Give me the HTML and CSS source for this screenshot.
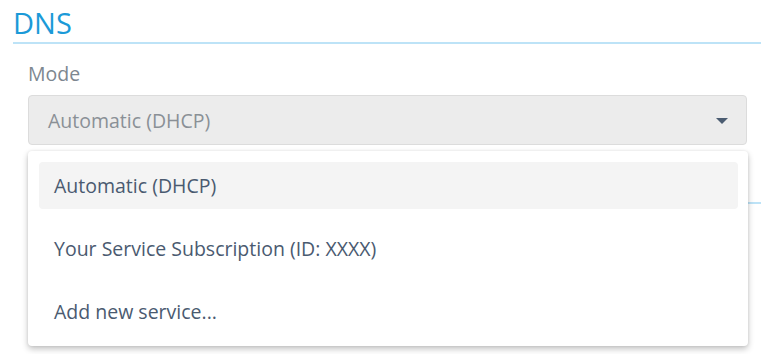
FILE: index.html
```html
<!DOCTYPE html>
<html>
<head>
<meta charset="utf-8">
<link rel="stylesheet" href="styles.css">
</head>
<body>
<div class="page">
  <section class="section">
    <h2 class="section-title">DNS</h2>
    <div class="field">
      <label class="field-label">Mode</label>
      <div class="select">
        <span class="select-value">Automatic (DHCP)</span>
        <svg class="select-arrow" width="12" height="6" viewBox="0 0 12 6"><path d="M0 0H12L6 6Z" fill="#4b5c71"/></svg>
      </div>
      <ul class="menu">
        <li class="menu-item active">Automatic (DHCP)</li>
        <li class="menu-item">Your Service Subscription (ID: XXXX)</li>
        <li class="menu-item">Add new service...</li>
      </ul>
    </div>
  </section>
  <section class="section next">
    <div class="next-line"></div>
  </section>
</div>
</body>
</html>
```
FILE: styles.css
```css
html, body {
  margin: 0;
  padding: 0;
  background: #ffffff;
}
body {
  font-family: "Open Sans", "Noto Sans", sans-serif;
  width: 761px;
  height: 354px;
  overflow: hidden;
}
.page {
  padding-left: 13px;
}
.section-title {
  margin: 0;
  padding-top: 3px;
  font-size: 29px;
  line-height: 39px;
  font-weight: 400;
  color: #1b9ad8;
  border-bottom: 2px solid #bde3f7;
}
.field {
  position: relative;
  padding-left: 15px;
  padding-right: 14px;
}
.field-label {
  display: block;
  margin-top: 17px;
  font-size: 19.5px;
  line-height: 26px;
  color: #7d8790;
}
.select {
  margin-top: 8px;
  height: 48px;
  border: 1px solid #dcdcdc;
  border-radius: 4px;
  background: #ececec;
  display: flex;
  align-items: center;
  justify-content: space-between;
  padding: 0 18px 0 19px;
}
.select-value {
  font-size: 19.5px;
  color: #8a9096;
}
.select-arrow {
  display: block;
  margin-top: 2px;
}
.menu {
  position: absolute;
  top: 90px;
  left: 15px;
  right: 13px;
  margin: 0;
  list-style: none;
  background: #ffffff;
  border-radius: 4px;
  box-shadow: 0 3px 6px rgba(0,0,0,0.24), 0 0 3px rgba(0,0,0,0.08);
  padding: 11px 10px 11px 11px;
  display: flex;
  flex-direction: column;
  gap: 16px;
  z-index: 2;
}
.menu-item {
  height: 47px;
  display: flex;
  align-items: center;
  padding-left: 15px;
  border-radius: 4px;
  font-size: 19.5px;
  color: #4a5a70;
}
.menu-item.active {
  background: #f4f4f4;
}
.next {
  padding-top: 57px;
  padding-left: 15px;
}
.next-line {
  border-bottom: 2px solid #bde3f7;
}
```
